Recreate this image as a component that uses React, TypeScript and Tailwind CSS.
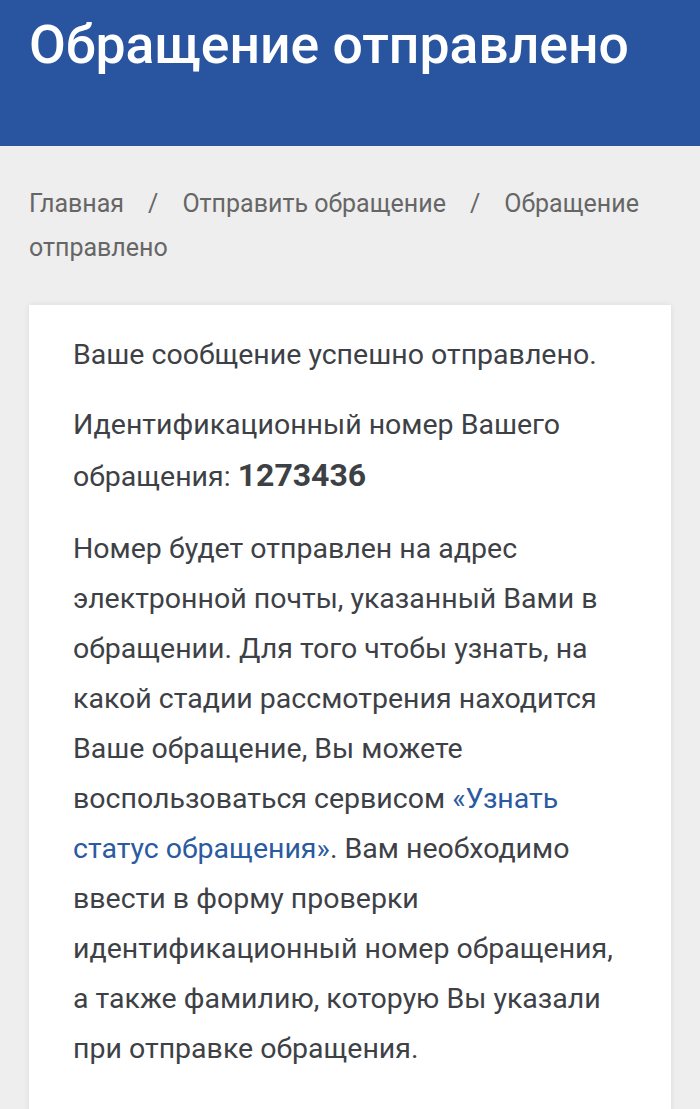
import React from "react";

export default function App() {
  const font = { fontFamily: "Roboto, 'Noto Sans', sans-serif" };
  return (
    <div className="min-h-[1109px] bg-[#eeeeee]" style={font}>
      <div className="h-[146px] bg-[#2955a0] px-[29px] pt-[18px]">
        <h1 className="text-[53.5px] leading-[54px] text-white font-medium whitespace-nowrap">
          Обращение отправлено
        </h1>
      </div>
      <div className="px-[29px] pt-[36px]">
        <nav className="text-[25px] leading-[44px] text-[#666666]">
          <span>Главная</span>
          <span className="px-[24px]">/</span>
          <span>Отправить обращение</span>
          <span className="px-[24px]">/</span>
          <span>Обращение</span>
          <br />
          <span>отправлено</span>
        </nav>
      </div>
      <div className="mx-[29px] mt-[35px] bg-white shadow-[0_0_6px_rgba(0,0,0,0.08)] pl-[44px] pr-[30px] pt-[25px] pb-[40px] text-[28.5px] leading-[50px] text-[#3d4146]">
        <p className="whitespace-nowrap">Ваше сообщение успешно отправлено.</p>
        <p className="mt-[20px] whitespace-nowrap">
          Идентификационный номер Вашего
          <br />
          обращения: <b className="font-bold text-[32px]">1273436</b>
        </p>
        <p className="mt-[22px] whitespace-nowrap">
          Номер будет отправлен на адрес
          <br />
          электронной почты, указанный Вами в
          <br />
          обращении. Для того чтобы узнать, на
          <br />
          какой стадии рассмотрения находится
          <br />
          Ваше обращение, Вы можете
          <br />
          воспользоваться сервисом <a className="text-[#2a5aa0]">«Узнать</a>
          <br />
          <a className="text-[#2a5aa0]">статус обращения»</a>. Вам необходимо
          <br />
          ввести в форму проверки
          <br />
          идентификационный номер обращения,
          <br />
          а также фамилию, которую Вы указали
          <br />
          при отправке обращения.
        </p>
      </div>
    </div>
  );
}
